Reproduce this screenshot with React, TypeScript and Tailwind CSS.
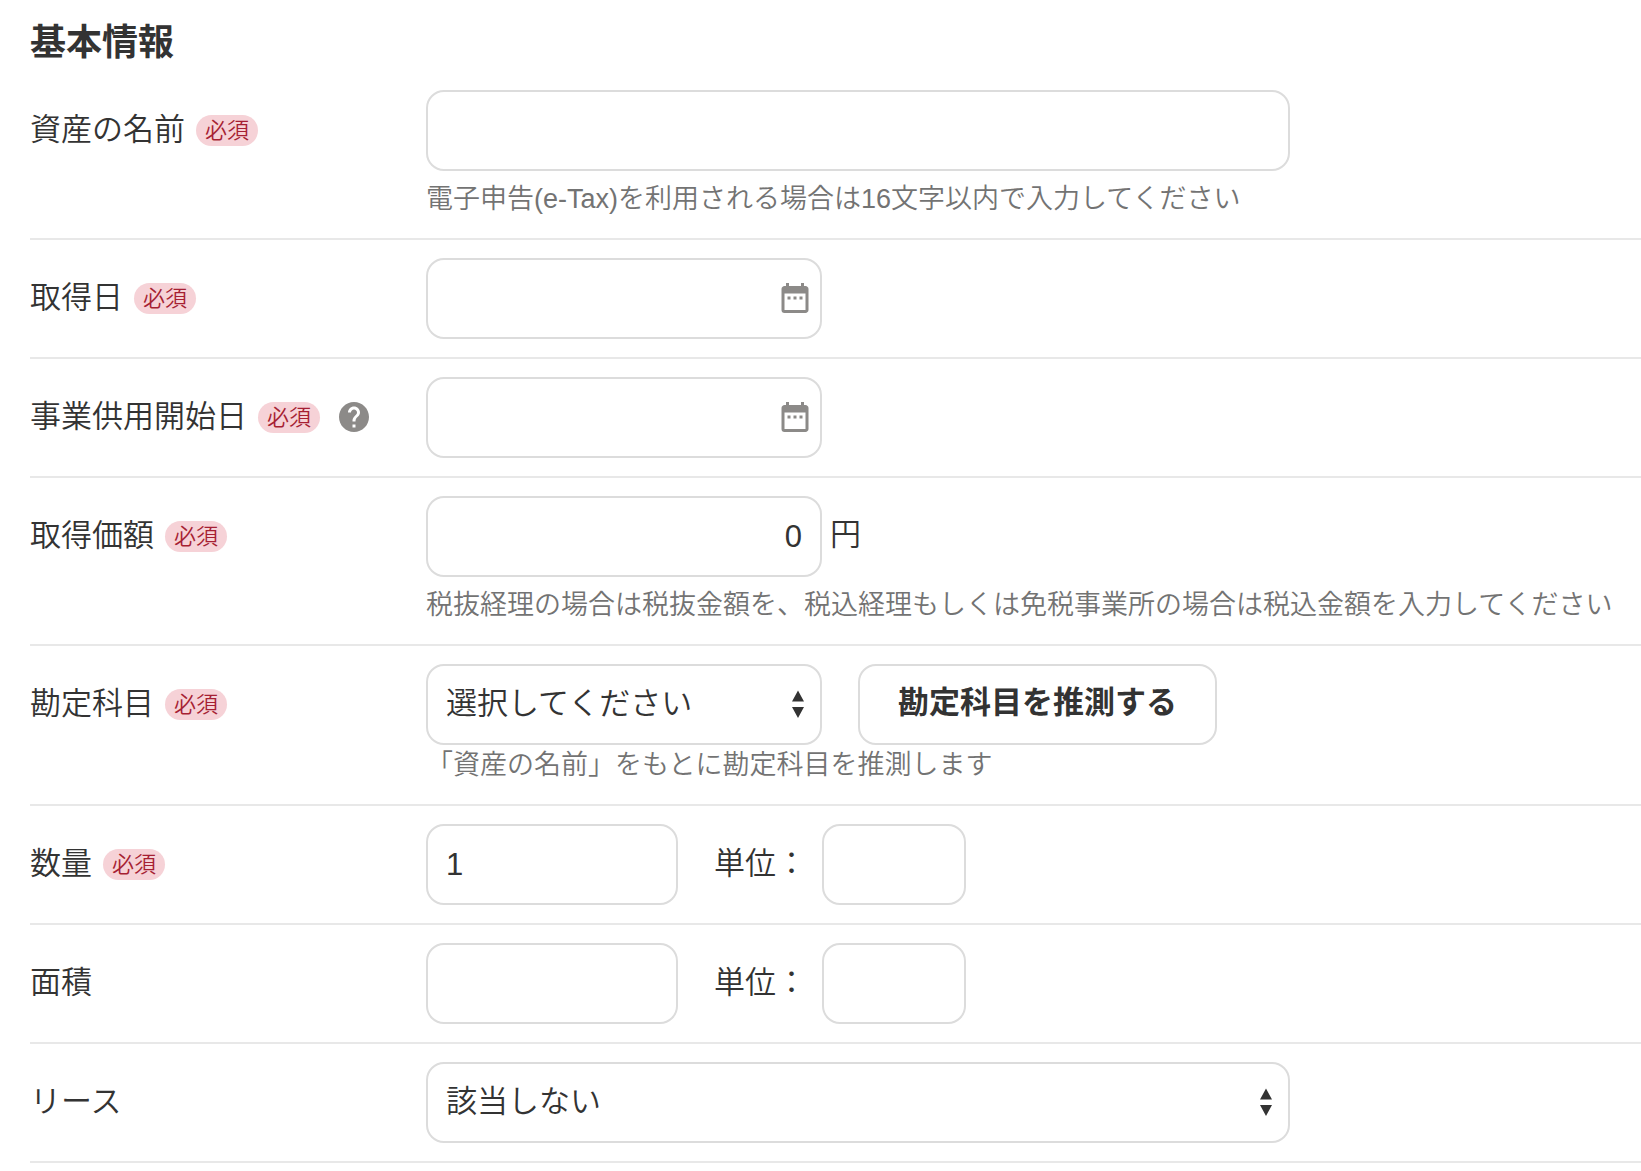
import type { InputHTMLAttributes, ReactNode, SelectHTMLAttributes } from "react";
import clsx from "clsx";
import { MdDateRange, MdHelp } from "react-icons/md";

const fieldClass =
  "h-[81px] max-w-full rounded-[18px] border-2 border-[#dcdcdc] bg-white px-[18px] text-[#333]";

const RequiredBadge = () => (
  <span className="rounded-full bg-[#f6d2d7] px-[9px] text-[22px] leading-[31px] text-[#a61f33]">
    必須
  </span>
);

interface FormRowProps {
  label: string;
  htmlFor: string;
  required?: boolean;
  help?: boolean;
  hint?: ReactNode;
  children: ReactNode;
}

const FormRow = ({ label, htmlFor, required, help, hint, children }: FormRowProps) => (
  <div className="flex border-b-2 border-[#e8e8e8] py-[18px]">
    <div className="flex h-20 w-[396px] shrink-0 items-center">
      <label htmlFor={htmlFor} className="pb-0.5">
        {label}
      </label>
      {required && (
        <span className="ml-[11px] flex">
          <RequiredBadge />
        </span>
      )}
      {help && (
        <button type="button" aria-label="ヘルプ" className="ml-4 text-[#8c8a88]">
          <MdHelp size={36} />
        </button>
      )}
    </div>
    <div className="min-w-0 flex-1">
      <div className="flex items-center">{children}</div>
      {hint}
    </div>
  </div>
);

const Hint = ({ className, children }: { className?: string; children: ReactNode }) => (
  <p className={clsx("text-[27px] leading-[41px] text-[#737373]", className)}>{children}</p>
);

const TextField = ({ className, ...props }: InputHTMLAttributes<HTMLInputElement>) => (
  <input type="text" className={clsx(fieldClass, className)} {...props} />
);

const DateField = ({ id }: { id: string }) => (
  <div className="relative w-[396px]">
    <TextField id={id} className="w-full pr-14" />
    <MdDateRange
      size={36}
      className="pointer-events-none absolute top-[22px] right-[9px] text-[#8c8a88]"
    />
  </div>
);

const SelectField = ({
  className,
  children,
  ...props
}: SelectHTMLAttributes<HTMLSelectElement>) => (
  <div className={clsx("relative max-w-full", className)}>
    <select className={clsx(fieldClass, "w-full appearance-none pb-0.5")} {...props}>
      {children}
    </select>
    <svg
      viewBox="0 0 12 28"
      className="pointer-events-none absolute top-[26px] right-[18px] h-7 w-3 fill-[#333]"
    >
      <path d="M6 0.5 12 11.5H0zM0 17h12L6 28z" />
    </svg>
  </div>
);

const UnitField = ({ id }: { id: string }) => (
  <>
    <label htmlFor={id} className="mr-[15px] ml-9 pb-0.5">
      単位：
    </label>
    <TextField id={id} className="w-36" />
  </>
);

const App = () => {
  return (
    <form className="min-h-screen bg-white pl-[30px] font-['Liberation_Sans','Noto_Sans_CJK_JP',sans-serif] text-[31px] leading-[47px] font-[350] text-[#333]">
      <h2 className="pt-[17px] pb-[3px] text-[36px] leading-[52px] font-bold">基本情報</h2>

      <FormRow
        label="資産の名前"
        htmlFor="name"
        required
        hint={
          <Hint className="mt-2">
            電子申告(e-Tax)を利用される場合は16文字以内で入力してください
          </Hint>
        }
      >
        <TextField id="name" className="w-[864px]" />
      </FormRow>

      <FormRow label="取得日" htmlFor="acquired" required>
        <DateField id="acquired" />
      </FormRow>

      <FormRow label="事業供用開始日" htmlFor="started" required help>
        <DateField id="started" />
      </FormRow>

      <FormRow
        label="取得価額"
        htmlFor="price"
        required
        hint={
          <Hint className="mt-2">
            税抜経理の場合は税抜金額を、税込経理もしくは免税事業所の場合は税込金額を入力してください
          </Hint>
        }
      >
        <TextField id="price" className="w-[396px] text-right" defaultValue="0" />
        <span className="ml-2 pb-1">円</span>
      </FormRow>

      <FormRow
        label="勘定科目"
        htmlFor="account"
        required
        hint={<Hint>「資産の名前」をもとに勘定科目を推測します</Hint>}
      >
        <SelectField id="account" className="w-[396px]">
          <option>選択してください</option>
        </SelectField>
        <button
          type="button"
          className="ml-9 h-[81px] rounded-[18px] border-2 border-[#dcdcdc] px-[38px] pb-1 font-bold"
        >
          勘定科目を推測する
        </button>
      </FormRow>

      <FormRow label="数量" htmlFor="quantity" required>
        <TextField id="quantity" className="w-[252px]" defaultValue="1" />
        <UnitField id="quantity-unit" />
      </FormRow>

      <FormRow label="面積" htmlFor="area">
        <TextField id="area" className="w-[252px]" />
        <UnitField id="area-unit" />
      </FormRow>

      <FormRow label="リース" htmlFor="lease">
        <SelectField id="lease" className="w-[864px]">
          <option>該当しない</option>
        </SelectField>
      </FormRow>
    </form>
  );
};

export default App;
